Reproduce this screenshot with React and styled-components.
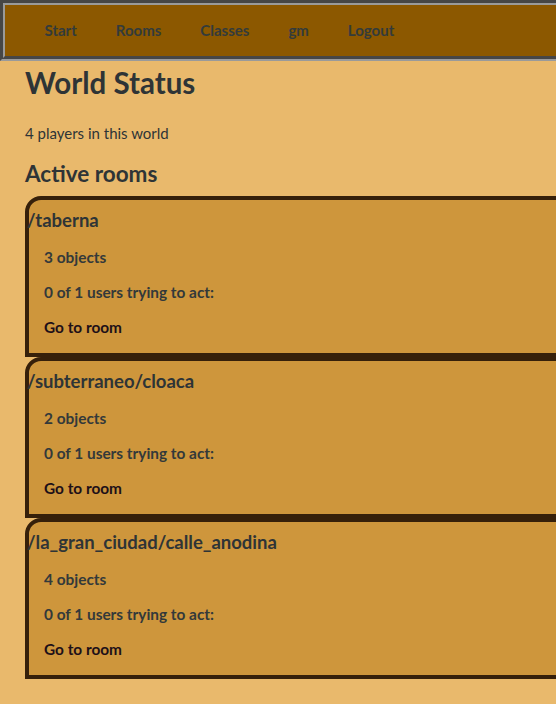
import React from "react";
import styled, { createGlobalStyle } from "styled-components";

const Global = createGlobalStyle`
  html, body { margin: 0; padding: 0; overflow-x: hidden; }
  body {
    background: #e9b96c;
    font-family: Lato, "Noto Sans", sans-serif;
    color: #2e3436;
  }
`;

const Nav = styled.nav`
  height: 51px;
  width: calc(100% + 20px);
  background: #8c5800;
  border: 5px groove #9a9a9a;
  display: flex;
  align-items: center;
`;

const NavList = styled.ul`
  list-style: none;
  margin: -2px 0 0;
  padding: 0 0 0 20px;
  display: flex;
`;

const NavItem = styled.li`
  padding: 0 19.5px;
  font-weight: bold;
  font-size: 15px;
  color: #333b3b;
`;

const Main = styled.main`
  padding: 0 0 0 25px;
`;

const Title = styled.h1`
  margin: 5px 0 0;
  font-size: 29.5px;
  font-weight: bold;
  line-height: 34px;
`;

const Players = styled.p`
  margin: 24px 0 0;
  font-size: 15px;
  line-height: 18px;
`;

const Section = styled.h2`
  margin: 19px 0 0;
  font-size: 22.5px;
  font-weight: bold;
  line-height: 26px;
`;

const Rooms = styled.div`
  margin-top: 9px;
  display: flex;
  flex-direction: column;
  width: calc(100% + 40px);
`;

const Card = styled.section`
  height: 153px;
  background: #ce963c;
  border: 4px solid #36200a;
  border-radius: 16px 16px 0 0;
  display: flex;
  flex-direction: column;
`;

const CardTitle = styled.h3`
  margin: 10px 0 0 -2px;
  font-size: 18.5px;
  font-weight: bold;
  line-height: 20px;
`;

const Line = styled.p`
  margin: ${(p) => p.$gap}px 0 0 15px;
  font-size: 15.4px;
  font-weight: bold;
  line-height: 18px;
  color: ${(p) => (p.$link ? "#1e1018" : "#33393a")};
`;

const rooms = [
  { path: "/taberna", objects: 3 },
  { path: "/subterraneo/cloaca", objects: 2 },
  { path: "/la_gran_ciudad/calle_anodina", objects: 4 },
];

export default function App() {
  return (
    <>
      <Global />
      <Nav>
        <NavList>
          {["Start", "Rooms", "Classes", "gm", "Logout"].map((n) => (
            <NavItem key={n}>{n}</NavItem>
          ))}
        </NavList>
      </Nav>
      <Main>
        <Title>World Status</Title>
        <Players>4 players in this world</Players>
        <Section>Active rooms</Section>
        <Rooms>
          {rooms.map((r) => (
            <Card key={r.path}>
              <CardTitle>{r.path}</CardTitle>
              <Line $gap={18}>{r.objects} objects</Line>
              <Line $gap={17}>0 of 1 users trying to act:</Line>
              <Line $gap={17} $link>Go to room</Line>
            </Card>
          ))}
        </Rooms>
      </Main>
    </>
  );
}
